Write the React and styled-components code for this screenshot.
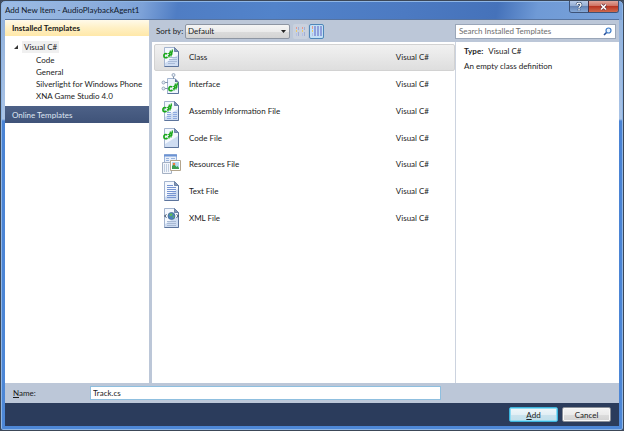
import { useState } from "react";
import styled, { createGlobalStyle } from "styled-components";

const GlobalStyle = createGlobalStyle`
  * {
    box-sizing: border-box;
  }
  body {
    margin: 0;
    background: #3f4a5c;
  }
  body, button, input, select {
    font-family: "Lato", "Liberation Sans", sans-serif;
    font-size: 8px;
    line-height: 10px;
    color: #1b1b1b;
  }
`

const Dialog = styled.div`
  display: flex;
  flex-direction: column;
  min-height: 100vh;
  padding: 0 4px 4px;
  border: 1px solid #3c4757;
  border-radius: 5px 5px 3px 3px;
  background:
    linear-gradient(100deg, #9dbce4 0, #8fb0dd 80px, #7da2d8 140px, #4f7dc4 175px, #5283ca 270px, #4c7ac2 400px, #4572ba 490px, #6f9ad6 530px, #7ba3da 100%) top / 100% 19px no-repeat,
    linear-gradient(#8fafd9 0, #a9c3e6 118px, #4a83d4 120px, #4d87d6 100%);
  box-shadow: inset 0 0 0 1px #8fb6e6;
`
const TitleBar = styled.header`
  display: flex;
  justify-content: space-between;
  height: 18px;
`
const Title = styled.h1`
  margin: 0;
  padding: 4px 0;
  font-size: 8px;
  line-height: 10px;
  font-weight: 400;
  color: #10182a;
`
const Caption = styled.div`
  display: flex;
  height: 12px;
  border: 1px solid #3d5378;
  border-top: 0;
  border-radius: 0 0 3px 3px;
  overflow: hidden;
`
const CaptionButton = styled.button`
  display: flex;
  align-items: center;
  justify-content: center;
  width: ${(props) => (props.$close ? "30px" : "18px")};
  padding: 0;
  border: 0;
  border-left: ${(props) => (props.$close ? "1px solid #4b3043" : "0")};
  background: ${(props) =>
    props.$close
      ? "linear-gradient(#dfa59b, #cf7161 45%, #b93522 50%, #cf6a4d)"
      : "linear-gradient(#b8cbe8, #93acd2 45%, #6685b5 50%, #86a9d8)"};
`
const Client = styled.main`
  flex: 1;
  display: flex;
  flex-direction: column;
  border-top: 1px solid #56739f;
  background: #bcc7d8;
`
const Panels = styled.div`
  flex: 1;
  display: flex;
`
const Sidebar = styled.nav`
  width: 144px;
  background: #fff;
`
const SectionTitle = styled.h2`
  margin: 0;
  padding: ${(props) => (props.$online ? "4px 7px 3px" : "3px 7px")};
  font-size: 8px;
  line-height: 10px;
  font-weight: ${(props) => (props.$online ? 400 : 700)};
  color: ${(props) => (props.$online ? "#dfe6f2" : "#1b1b1b")};
  background: ${(props) =>
    props.$online ? "linear-gradient(#4d6187, #3f5379)" : "linear-gradient(#fffaea, #fff0c4 50%, #ffe8a8)"};
`
const Tree = styled.ul`
  margin: 0;
  padding: 5px 0 4px;
  list-style: none;
`
const TreeItem = styled.li`
  display: flex;
  align-items: center;
  gap: 3px;
  height: 12px;
  padding-left: ${(props) => (props.$root ? "8px" : "31px")};
  margin-bottom: ${(props) => (props.$root ? "1px" : "0")};
  white-space: nowrap;
`
const TreeLabel = styled.span`
  padding: ${(props) => (props.$root ? "1px 2px" : "0")};
  background: ${(props) => (props.$root ? "#f0f0f0" : "none")};
`
const Content = styled.section`
  flex: 1;
  display: flex;
  flex-direction: column;
  margin-left: 3px;
`
const Toolbar = styled.div`
  display: flex;
  align-items: center;
  height: 22px;
  padding: 0 3px 0 4px;
`
const SortLabel = styled.label`
  width: 29px;
  white-space: nowrap;
`
const SelectBox = styled.div`
  position: relative;
  width: 105px;
  margin-right: 3px;
`
const Select = styled.select`
  display: block;
  width: 100%;
  height: 15px;
  padding: 0 2px;
  appearance: none;
  border: 1px solid #8d95a2;
  border-radius: 2px;
  background: linear-gradient(#f5f5f5, #ebebeb 50%, #dcdcdc 51%, #d3d3d3);
`
const SelectArrow = styled.svg`
  position: absolute;
  top: 6px;
  right: 4px;
  pointer-events: none;
`
const ViewButton = styled.button`
  display: flex;
  align-items: center;
  justify-content: center;
  width: 15px;
  height: 15px;
  margin-right: 1px;
  padding: 0;
  border: 1px solid ${(props) => (props.$active ? "#4e86b8" : "transparent")};
  border-radius: 2px;
  background: ${(props) => (props.$active ? "#c3e0f5" : "#c9d1de")};
`
const SearchBox = styled.div`
  display: flex;
  align-items: center;
  width: 161px;
  height: 15px;
  margin-left: auto;
  padding: 0 3px;
  border: 1px solid #9aa6b8;
  background: #fff;
`
const SearchInput = styled.input`
  flex: 1;
  min-width: 0;
  padding: 0;
  border: 0;
  outline: 0;
  background: none;
  &::placeholder {
    color: #6d6d6d;
    opacity: 1;
  }
`
const Results = styled.div`
  flex: 1;
  display: flex;
  background: #fff;
`
const TemplateList = styled.ul`
  flex: 1;
  display: flex;
  flex-direction: column;
  height: 189px;
  margin: 0;
  padding: 2px 0 0 2px;
  list-style: none;
`
const TemplateRow = styled.li`
  flex: 1;
  display: flex;
  align-items: center;
  padding: 0 25px 0 6px;
  border: 1px solid ${(props) => (props.$selected ? "#d2d2d2" : "transparent")};
  border-radius: 2px;
  background: ${(props) => (props.$selected ? "linear-gradient(#f1f1f1, #dedede)" : "none")};
`
const TemplateName = styled.span`
  flex: 1;
  padding-left: 6px;
`
const Details = styled.aside`
  width: 164px;
  padding: 4px 8px;
  border-left: 1px solid #ccd3df;
`
const Line = styled.p`
  margin: 0 0 5px;
`
const TypeName = styled.b`
  margin-right: 5px;
`
const NameRow = styled.div`
  display: flex;
  align-items: center;
  height: 20px;
  padding: 0 8px;
`
const NameLabel = styled.label`
  width: 77px;
`
const NameInput = styled.input`
  flex: 1;
  height: 14px;
  margin-right: 170px;
  padding: 0 2px;
  border: 1px solid #8fbfdf;
  outline: 0;
  background: #fff;
`
const Footer = styled.footer`
  display: flex;
  justify-content: flex-end;
  gap: 4px;
  height: 23px;
  padding: 4px 8px;
  background: #2b3c5c;
`
const Button = styled.button`
  width: 49px;
  height: 15px;
  padding: 0;
  border: 1px solid ${(props) => (props.$primary ? "#3cb4dc" : "#8a8f98")};
  border-radius: 2px;
  box-shadow: ${(props) => (props.$primary ? "inset 0 0 0 1px #8fdcf4" : "inset 0 0 0 1px #f8f8f8")};
  background: ${(props) =>
    props.$primary
      ? "linear-gradient(#f0f7fa, #e2eff5 50%, #cbe3ed 51%, #c1dfeb)"
      : "linear-gradient(#f4f4f4, #ebebeb 50%, #dddddd 51%, #d2d2d2)"};
`

const Page = () => (
  <>
    <path d="M3.500 1.500H13.500L17.500 5.500V20.500H3.500Z" fill="#cfddf2" stroke="#a3b4cf" />
    <path d="M4 2H13V6H17V9L4 17Z" fill="#f4f8fe" />
    <path d="M13.500 1.500V5.500H17.500Z" fill="#8195b5" stroke="#60779d" strokeWidth=".8" />
    <path d="M3.500 20.500H17.500V5.500" fill="none" stroke="#5c749c" />
  </>
)

// slanted C# mark shared by the code templates
const Sharp = ({ x = 0, y = 0 }) => (
  <g transform={`translate(${x} ${y})`} fill="none" stroke="#1ba81b">
    <path d="M6.300 8C4.500 6.800 2.800 8 2.900 10C3 12 5 12.200 6.500 11" strokeWidth="1.700" />
    <path d="M7.800 11.500L9.500 4.500M9.800 10.500L11.500 3.500" strokeWidth="1.200" />
    <path d="M7.200 7.800L12 5.600M6.900 10L11.600 7.800" strokeWidth="1.100" />
  </g>
)

const Globe = () => (
  <>
    <circle cx="10.500" cy="9" r="3.500" fill="#4a80bd" stroke="#456c98" strokeWidth=".8" />
    <path d="M8 8L10 6L12 7.500L10 9.500ZM11.500 9.500L13.500 8.500L12.500 11.500Z" fill="#5cb85c" />
    <path d="M5.500 7.500L3.500 9L5.500 10.500M15.500 7.500L17.500 9L15.500 10.500" fill="none" stroke="#34455f" />
  </>
)

const drawings = {
  class: (
    <>
      <Page />
      <path d="M9 11.500H16M8 13.500H16M7 15.500H16M7 17.500H14" stroke="#a9bbd8" />
      <Sharp />
    </>
  ),
  interface: (
    <>
      <path d="M6.500 5.500H14L17.500 9V20.500H6.500Z" fill="#eff5fd" stroke="#a3b4cf" />
      <path d="M14 5.500V9H17.500Z" fill="#60779d" />
      <path d="M6.500 20.500H17.500V9" fill="none" stroke="#5c749c" />
      <path d="M12.500 3V6M4 9.500H7M4 15.500H7" fill="none" stroke="#8294ad" />
      <g fill="#e6edf6" stroke="#8f9fb6" strokeWidth=".9">
        <circle cx="12.500" cy="2" r="1.500" />
        <circle cx="2.500" cy="9.500" r="1.500" />
        <circle cx="2.500" cy="15.500" r="1.500" />
      </g>
      <Sharp x={5} y={6} />
    </>
  ),
  assembly: (
    <>
      <Page />
      <path d="M6 12.500H10M12 12.500H16M6 14.500H10M12 14.500H16M6 16.500H10M12 16.500H16M6 18.500H10M12 18.500H16" stroke="#8eaae0" />
      <Sharp x={-1} />
    </>
  ),
  code: (
    <>
      <Page />
      <Sharp />
    </>
  ),
  resources: (
    <>
      <path d="M3.500 1.500H15.500V12.500H3.500Z" fill="#e8effa" stroke="#9db4d8" />
      <path d="M3 2.500H16" stroke="#6b93d4" strokeWidth="2" />
      <path d="M5 5.500H8M10 5.500H14M5 7.500H8M10 7.500H13" stroke="#9ab4dc" />
      <path d="M1.500 9.500H10.500V20.500H1.500Z" fill="#f3f6fb" stroke="#a5b1c4" />
      <path d="M3.500 11V19M5.500 11V19M7.500 11V19" stroke="#c0cde0" />
      <path d="M9.500 7.500H19.500V17.500H9.500Z" fill="#fff" stroke="#b3a58d" />
      <path d="M11 9H18V16H11Z" fill="#b7d8f3" />
      <path d="M11 16V13L13 11L15.500 14L16.500 13L18 15V16Z" fill="#3b9f51" />
      <circle cx="13" cy="11" r="1.300" fill="#ed7d3d" />
    </>
  ),
  text: (
    <>
      <Page />
      <path d="M6 5.500H12M6 7.500H15M6 9.500H15M6 11.500H15M6 13.500H15M6 15.500H15M6 17.500H15" stroke="#7694d2" />
    </>
  ),
  xml: (
    <>
      <Page />
      <path d="M6 14.500H15M6 16.500H15M6 18.500H15" stroke="#a8b9d3" />
      <Globe />
    </>
  ),
}

const TemplateIcon = ({ kind }) => (
  <svg width="22" height="22" viewBox="0 0 22 22" aria-hidden="true">
    {drawings[kind]}
  </svg>
)

const ViewIcon = ({ large }) => (
  <svg width="11" height="11" viewBox="0 0 11 11" aria-hidden="true">
    {large ? (
      <path d="M3 0H5V10H3ZM6 0H8V10H6ZM9 0H11V10H9Z" fill="#8f9fdc" />
    ) : (
      <path d="M3 1H4V4H3ZM3 6H4V10H3ZM9 1H10V4H9ZM9 6H10V10H9Z" fill="#a3afd6" />
    )}
    <path d={large ? "M1.500 0V3" : "M1.500 1V3M7.500 1V3"} stroke="#e69a8d" />
    <path d={large ? "M1.500 4V6" : "M1.500 4V6M7.500 4V6"} stroke="#e8c96c" />
    <path d={large ? "M1.500 7V10" : "M1.500 7V10M7.500 7V10"} stroke="#b4bfe2" />
  </svg>
)

const categories = ["Code", "General", "Silverlight for Windows Phone", "XNA Game Studio 4.0"]

const templates = [
  { kind: "class", name: "Class" },
  { kind: "interface", name: "Interface" },
  { kind: "assembly", name: "Assembly Information File" },
  { kind: "code", name: "Code File" },
  { kind: "resources", name: "Resources File" },
  { kind: "text", name: "Text File" },
  { kind: "xml", name: "XML File" },
]

const App = () => {
  const [selected, setSelected] = useState("class")
  const [name, setName] = useState("Track.cs")

  return (
    <>
      <GlobalStyle />
      <Dialog>
        <TitleBar>
          <Title>Add New Item - AudioPlaybackAgent1</Title>
          <Caption>
            <CaptionButton aria-label="Help">
              <svg width="8" height="9" viewBox="0 0 8 9">
                <path d="M2 3C2 .5 6 .5 6 3C6 4.500 4 4 4 6M4 7V8.500" fill="none" stroke="#35496b" strokeWidth="2.600" />
                <path d="M2 3C2 .5 6 .5 6 3C6 4.500 4 4 4 6M4 7V8.500" fill="none" stroke="#fff" strokeWidth="1.300" />
              </svg>
            </CaptionButton>
            <CaptionButton $close aria-label="Close">
              <svg width="9" height="8" viewBox="0 0 9 8">
                <path d="M2 1.500L7 6.500M7 1.500L2 6.500" stroke="#6b3039" strokeWidth="3" />
                <path d="M2 1.500L7 6.500M7 1.500L2 6.500" stroke="#fff" strokeWidth="1.600" />
              </svg>
            </CaptionButton>
          </Caption>
        </TitleBar>
        <Client>
          <Panels>
            <Sidebar>
              <SectionTitle>Installed Templates</SectionTitle>
              <Tree>
                <TreeItem $root>
                  <svg width="6" height="6" viewBox="0 0 6 6">
                    <path d="M5 1V5H1Z" fill="#333" />
                  </svg>
                  <TreeLabel $root>Visual C#</TreeLabel>
                </TreeItem>
                {categories.map((category) => (
                  <TreeItem key={category}>
                    <TreeLabel>{category}</TreeLabel>
                  </TreeItem>
                ))}
              </Tree>
              <SectionTitle $online>Online Templates</SectionTitle>
            </Sidebar>
            <Content>
              <Toolbar>
                <SortLabel htmlFor="sort">Sort by:</SortLabel>
                <SelectBox>
                  <Select id="sort">
                    <option>Default</option>
                  </Select>
                  <SelectArrow width="5" height="3" viewBox="0 0 5 3">
                    <path d="M0 0H5L2.500 3Z" fill="#222" />
                  </SelectArrow>
                </SelectBox>
                <ViewButton aria-label="Small icons">
                  <ViewIcon />
                </ViewButton>
                <ViewButton $active aria-label="Medium icons">
                  <ViewIcon large />
                </ViewButton>
                <SearchBox>
                  <SearchInput type="search" aria-label="Search" placeholder="Search Installed Templates" />
                  <svg width="9" height="9" viewBox="0 0 9 9">
                    <circle cx="5.500" cy="3.500" r="2.500" fill="#e5f2ff" stroke="#3f7cc8" strokeWidth="1.200" />
                    <path d="M3.500 5.500L1 8" stroke="#274f9b" strokeWidth="1.600" />
                  </svg>
                </SearchBox>
              </Toolbar>
              <Results>
                <TemplateList>
                  {templates.map((item) => (
                    <TemplateRow
                      key={item.kind}
                      $selected={item.kind === selected}
                      onClick={() => setSelected(item.kind)}
                    >
                      <TemplateIcon kind={item.kind} />
                      <TemplateName>{item.name}</TemplateName>
                      <span>Visual C#</span>
                    </TemplateRow>
                  ))}
                </TemplateList>
                <Details>
                  <Line>
                    <TypeName>Type:</TypeName>
                    Visual C#
                  </Line>
                  <Line>An empty class definition</Line>
                </Details>
              </Results>
            </Content>
          </Panels>
          <NameRow>
            <NameLabel htmlFor="name">
              <u>N</u>ame:
            </NameLabel>
            <NameInput id="name" value={name} onChange={(e) => setName(e.target.value)} />
          </NameRow>
          <Footer>
            <Button $primary>
              <u>A</u>dd
            </Button>
            <Button>Cancel</Button>
          </Footer>
        </Client>
      </Dialog>
    </>
  )
}

export default App
